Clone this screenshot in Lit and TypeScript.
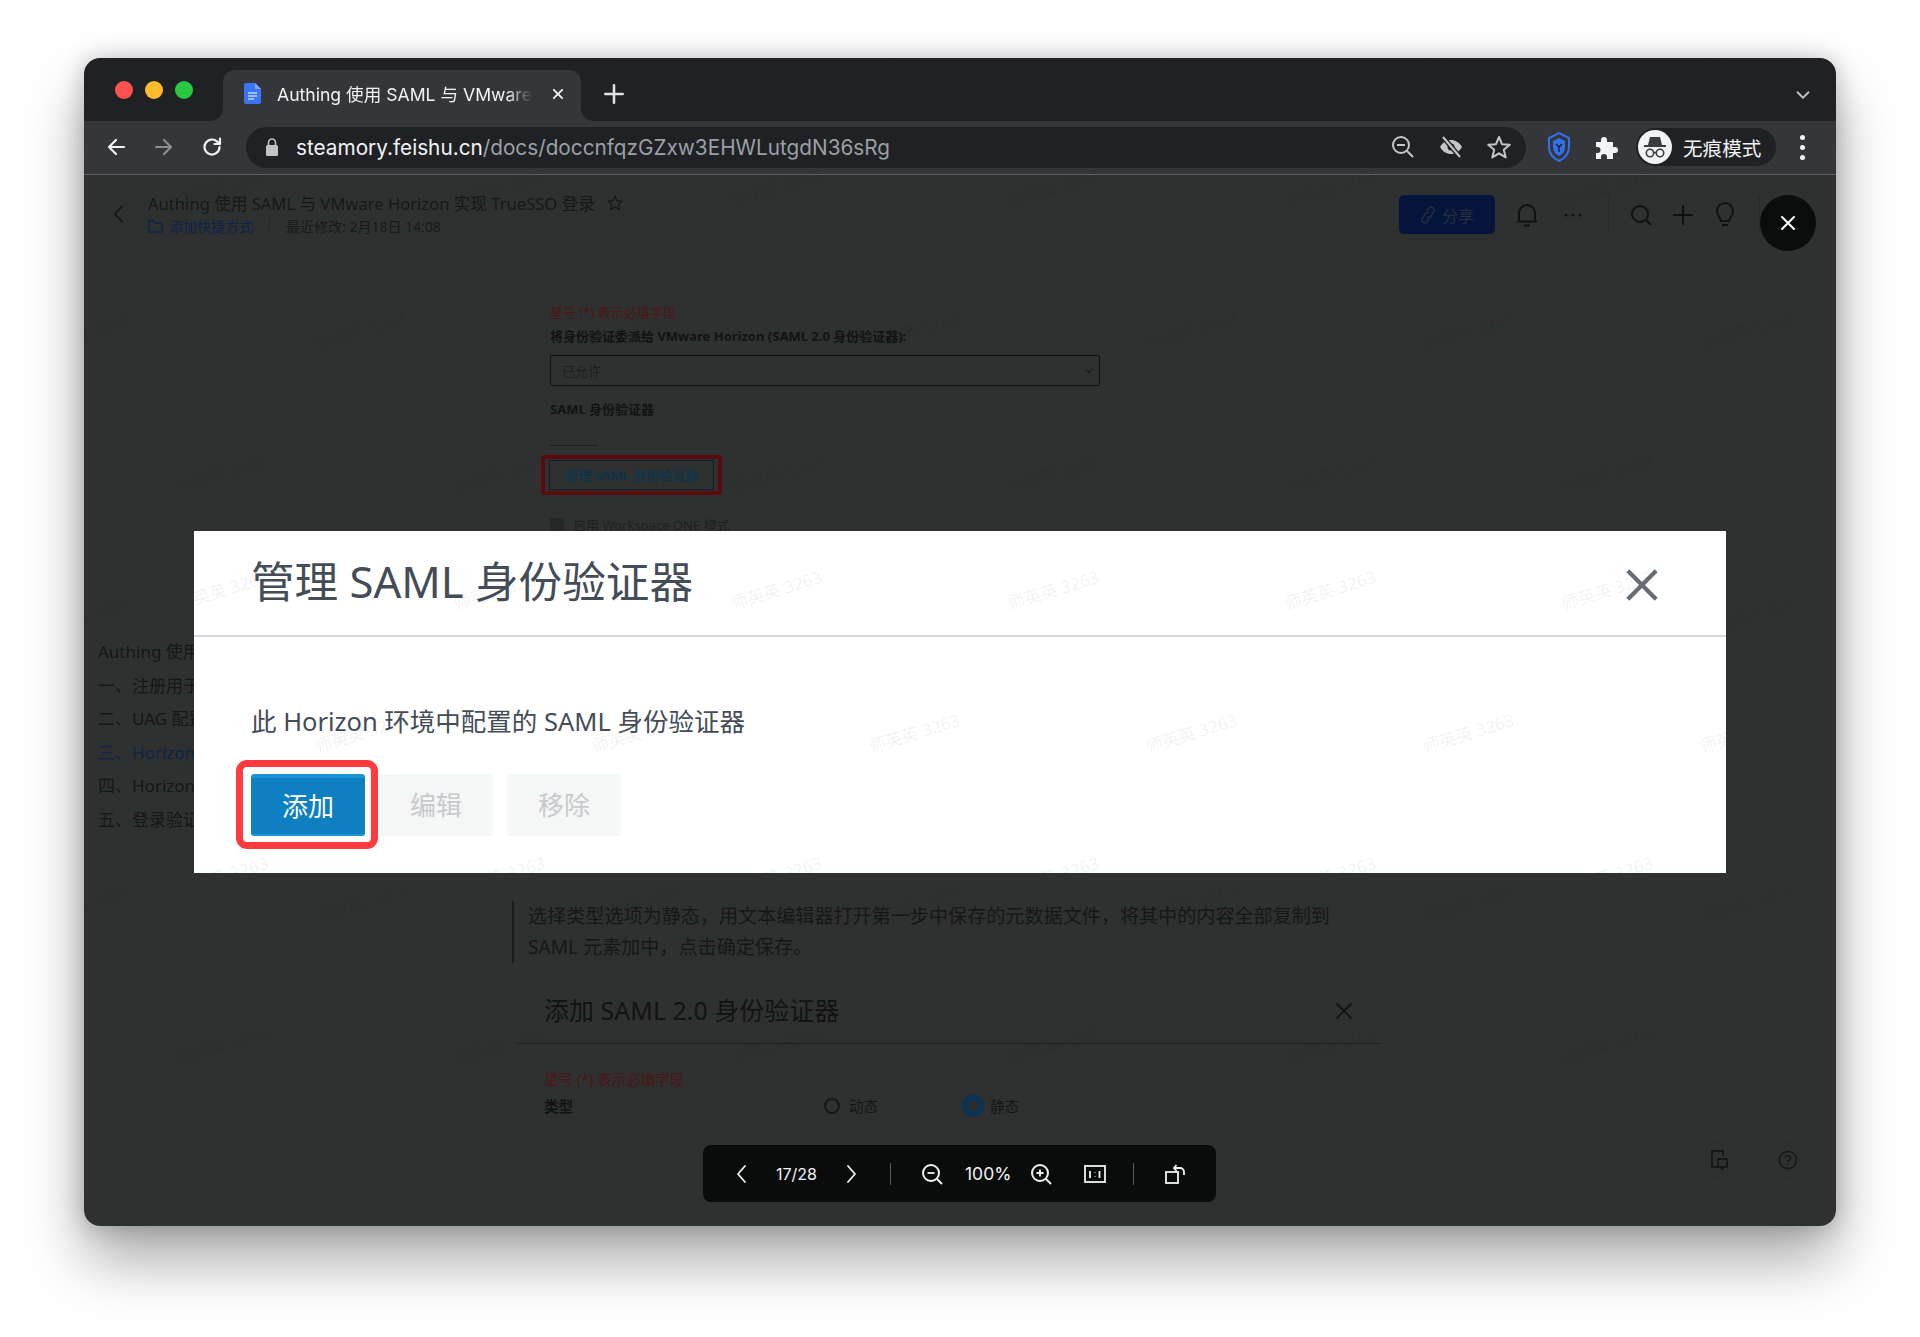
import { LitElement, html, css, svg } from "lit";
import { customElement } from "lit/decorators.js";

const ui = css`
  * { box-sizing: border-box; }
  svg { display: block; flex: none; }
`;

// watermark rows repeat every 143px, each second row shifted by 138px
const wmItems = (ox: number, oy: number, w: number, h: number) => {
  const items: { x: number; y: number }[] = [];
  for (let r = 0; r < 9; r++) {
    const y = 17 + r * 143;
    const shift = r % 2 === 0 ? 0 : 138;
    for (let k = -1; k < 8; k++) {
      const x = 222 + shift + k * 277;
      if (x - ox > -80 && x - ox < w + 80 && y - oy > -40 && y - oy < h + 40) {
        items.push({ x: x - ox, y: y - oy });
      }
    }
  }
  return items;
};

const chev = (d: string, size = 24, sw = 2) =>
  html`<svg width=${size} height=${size} viewBox="0 0 24 24" fill="none" stroke="currentColor" stroke-width=${sw} stroke-linecap="round" stroke-linejoin="round"><path d=${d}></path></svg>`;

@customElement("chrome-bar")
export class ChromeBar extends LitElement {
  static styles = [
    ui,
    css`
      :host { display: block; font-family: Inter, "Noto Sans CJK SC", sans-serif; }
      .strip {
        height: 63px;
        background: #202124;
        display: flex;
        align-items: flex-start;
        position: relative;
      }
      .lights { display: flex; gap: 12px; width: 139px; padding: 23px 0 0 31px; }
      .lights i { width: 18px; height: 18px; border-radius: 50%; display: block; }
      .tab {
        width: 358px;
        height: 51px;
        margin-top: 12px;
        background: #35363a;
        border-radius: 12px 12px 0 0;
        position: relative;
        display: flex;
        align-items: center;
        padding: 0 0 4px 21px;
        color: #f1f3f4;
        font-size: 17.6px;
      }
      .tab::before, .tab::after {
        content: "";
        position: absolute;
        bottom: 0;
        width: 12px;
        height: 12px;
      }
      .tab::before { left: -12px; background: radial-gradient(circle at 0 0, transparent 11.5px, #35363a 12px); }
      .tab::after { right: -12px; background: radial-gradient(circle at 100% 0, transparent 11.5px, #35363a 12px); }
      .tab-title {
        width: 255px;
        margin-left: 16px;
        white-space: nowrap;
        overflow: hidden;
        -webkit-mask-image: linear-gradient(90deg, #000 90%, transparent);
        mask-image: linear-gradient(90deg, #000 90%, transparent);
      }
      .tab-x { margin-left: 16px; color: #f1f3f4; }
      .plus { margin: 23px 0 0 20px; color: #dfe1e5; }
      .more { margin: 26px 0 0 auto; padding-right: 22px; color: #bdc1c6; }
      .tools {
        height: 54px;
        background: #35363a;
        border-bottom: 1px solid #5f6063;
        display: flex;
        align-items: center;
        padding-bottom: 1px;
        position: relative;
      }
      .nav { width: 162px; display: flex; padding-left: 20px; gap: 24px; color: #f1f3f4; }
      .nav .off { color: #8c8e91; }
      .omni {
        width: 1280px;
        height: 41px;
        border-radius: 21px;
        background: #202124;
        display: flex;
        align-items: center;
        padding: 0 14px 0 18px;
      }
      .url { margin-left: 16px; font-size: 20.75px; color: #f1f3f4; white-space: nowrap; flex: 1; }
      .url span { color: #9aa0a6; }
      .omni-icons { display: flex; gap: 22px; color: #c4c7c9; }
      .ext { display: flex; align-items: center; gap: 23px; margin-left: 21px; }
      .pill {
        width: 140px;
        height: 38px;
        margin-left: 18px;
        border-radius: 19px;
        background: #202124;
        display: flex;
        align-items: center;
        padding-left: 2px;
        color: #f1f3f4;
        font-size: 19.6px;
        gap: 11px;
      }
      .avatar { width: 34px; height: 34px; border-radius: 50%; background: #f1f3f4; display: flex; align-items: center; justify-content: center; }
      .dots { margin-left: 24px; display: flex; flex-direction: column; gap: 5px; }
      .dots i { width: 5px; height: 5px; border-radius: 50%; background: #f1f3f4; display: block; }
    `,
  ];

  render() {
    return html`
      <div class="strip">
        <div class="lights">
          <i style="background:#ff5150"></i><i style="background:#ffbb2c"></i><i style="background:#28c941"></i>
        </div>
        <div class="tab">
          <svg width="17" height="21" viewBox="0 0 17 21">
            <path d="M2 0h9l6 6v13a2 2 0 0 1-2 2H2a2 2 0 0 1-2-2V2a2 2 0 0 1 2-2z" fill="#3b74f5"></path>
            <path d="M11 0l6 6h-6z" fill="#7ea6fa"></path>
            <path d="M4 10h9M4 13h9M4 16h6" stroke="#fff" stroke-width="1.2"></path>
          </svg>
          <div class="tab-title">Authing 使用 SAML 与 VMware Horizon</div>
          <div class="tab-x">${chev("M7 7l10 10M17 7L7 17", 20, 2.2)}</div>
        </div>
        <div class="plus">${chev("M12 4v16M4 12h16", 26, 2.4)}</div>
        <div class="more">${chev("M6 9l6 6 6-6", 22, 2)}</div>
      </div>
      <div class="tools">
        <div class="nav">
          <div>${chev("M20 12H5M12 5l-7 7 7 7", 24, 2.2)}</div>
          <div class="off">${chev("M4 12h15M12 5l7 7-7 7", 24, 2.2)}</div>
          <div>${chev("M19.5 12a7.5 7.5 0 1 1-2.3-5.4L20 9M20 3.5V9h-5.5", 24, 2.2)}</div>
        </div>
        <div class="omni">
          <svg width="16" height="20" viewBox="0 0 16 20" fill="#bfc3c7">
            <rect x="2" y="8" width="12" height="11" rx="1.5"></rect>
            <path d="M4.5 8V5.5a3.5 3.5 0 0 1 7 0V8" fill="none" stroke="#bfc3c7" stroke-width="1.6"></path>
          </svg>
          <div class="url">steamory.feishu.cn<span>/docs/doccnfqzGZxw3EHWLutgdN36sRg</span></div>
          <div class="omni-icons">
            <svg width="26" height="26" viewBox="0 0 26 26" fill="none" stroke="currentColor" stroke-width="2">
              <circle cx="11" cy="11" r="8"></circle><path d="M7 11h8M17 17l6 6"></path>
            </svg>
            <svg width="26" height="26" viewBox="0 0 26 26" fill="none">
              <path d="M2 13c3-5 7-7 11-7s8 2 11 7c-3 5-7 7-11 7s-8-2-11-7z" fill="#c4c7c9"></path>
              <circle cx="13" cy="13" r="3.5" fill="#202124"></circle>
              <path d="M5 3l17 20" stroke="#202124" stroke-width="5"></path>
              <path d="M5 3l17 20" stroke="#c4c7c9" stroke-width="2"></path>
            </svg>
            <svg width="26" height="26" viewBox="0 0 26 26" fill="none" stroke="currentColor" stroke-width="2" stroke-linejoin="round">
              <path d="M13 3l3 7.200 7.800.6-6 5 1.900 7.600L13 19.300 6.300 23.400l1.900-7.600-6-5 7.800-.6z"></path>
            </svg>
          </div>
        </div>
        <div class="ext">
          <svg width="24" height="30" viewBox="0 0 24 30" fill="none" stroke="#3270f0" stroke-width="2">
            <path d="M12 1l10 5v9c0 6-4 11-10 14C6 26 2 21 2 15V6z"></path>
            <path d="M12 6l6 3v6c0 4-2 7-6 9-4-2-6-5-6-9V9z" fill="#3270f0" stroke="none"></path>
            <path d="M9 12l3 3 3-3M12 15v5" stroke="#202124" stroke-width="1.500"></path>
          </svg>
          <svg width="24" height="24" viewBox="0 0 24 24" fill="#f1f3f4">
            <path d="M2 7h5V5a3 3 0 0 1 6 0v2h6v5h2a3 3 0 0 1 0 6h-2v6h-6v-2a3 3 0 0 0-6 0v2H2v-6h1.500a3 3 0 0 0 0-6H2z"></path>
          </svg>
        </div>
        <div class="pill">
          <div class="avatar">
            <svg width="26" height="26" viewBox="0 0 26 26" fill="#3a3c40">
              <path d="M8 3h10l2 8H6z"></path><rect x="2" y="11" width="22" height="2"></rect>
              <circle cx="8" cy="19" r="3.700" fill="none" stroke="#3a3c40" stroke-width="1.600"></circle>
              <circle cx="18" cy="19" r="3.700" fill="none" stroke="#3a3c40" stroke-width="1.600"></circle>
              <path d="M11.500 18.500h3" stroke="#3a3c40" stroke-width="1.500"></path>
            </svg>
          </div>
          无痕模式
        </div>
        <div class="dots"><i></i><i></i><i></i></div>
      </div>
    `;
  }
}

@customElement("doc-page")
export class DocPage extends LitElement {
  static styles = [
    ui,
    css`
      :host {
        display: block;
        height: 1052px;
        overflow: hidden;
        background: #2f3130;
        font-family: "Noto Sans", "Noto Sans CJK SC", sans-serif;
        color: #131515;
      }
      .head { height: 80px; display: flex; position: relative; padding: 16px 0 0 22px; }
      .back { margin-top: 10px; width: 42px; color: #131515; }
      .title-line { display: flex; align-items: center; gap: 11px; font-size: 16.6px; height: 24px; color: #151717; }
      .sub { display: flex; align-items: center; font-size: 14px; height: 22px; color: #171919; }
      .sub .link { color: #0d2348; display: flex; align-items: center; gap: 6px; }
      .sub .bar { width: 1px; height: 16px; background: #26282a; margin: 0 16px; }
      .head-right { margin-left: auto; display: flex; align-items: center; height: 39px; margin-top: 4px; padding-right: 76px; color: #0f1111; }
      .share {
        width: 96px; height: 39px; border-radius: 5px; background: #05143a; color: #272e40;
        display: flex; align-items: center; justify-content: center; gap: 6px; font-size: 16px;
      }
      .vsep { width: 1px; height: 38px; background: #26282a; }
      .body { display: flex; }
      .toc { width: 428px; padding: 380px 0 0 14px; font-size: 17px; line-height: 33.5px; color: #141616; white-space: nowrap; }
      .toc .on { color: #0d2348; }
      .main { flex: 1; padding-top: 48px; }
      .form { padding-left: 38px; font-size: 13px; line-height: 18px; }
      .req { color: #4c1516; }
      .label { font-weight: 700; color: #111313; }
      .label-a { margin-top: 6px; }
      .select {
        width: 550px; height: 31px; margin-top: 10px; border: 1px solid #111313; border-radius: 2px;
        display: flex; align-items: center; justify-content: space-between; padding: 0 4px 0 11px; color: #1c1e1e;
      }
      .label-b { margin-top: 14px; }
      .tick { width: 48px; height: 1px; background: #1d1f1f; margin-top: 27px; }
      .mark { display: inline-block; border: 4px solid #5a0b0e; border-radius: 4px; padding: 1px 4px; margin: 9px 0 0 -9px; }
      .mgr {
        width: 165px; height: 30px; border: 1px solid #101c26; display: flex; align-items: center; justify-content: center;
        color: #0a3450; font-weight: 500;
      }
      .ws { display: flex; align-items: center; gap: 9px; margin-top: 21px; font-size: 13px; color: #1e2020; }
      .ws i { width: 14px; height: 14px; background: #262828; display: block; }
      .quote {
        margin-top: 367px; border-left: 2px solid #1a1c1c; padding-left: 14px;
        font-size: 19.1px; line-height: 31px; height: 62px; color: #151717; white-space: nowrap;
      }
      .dlg-head {
        width: 863px; margin: 31px 0 0 5px; height: 50px; padding: 0 24px 19px 27px; border-bottom: 1px solid #1d1f1f;
        display: flex; align-items: center; justify-content: space-between; font-size: 25px; color: #111313;
      }
      .dlg-x { margin-top: 4px; }
      .dlg-body { padding: 26px 0 0 32px; font-size: 14.5px; line-height: 18px; }
      .row { display: flex; align-items: center; margin-top: 7px; }
      .row .label { width: 280px; }
      .radio { width: 16px; height: 16px; border-radius: 50%; border: 2px solid #141616; margin-right: 9px; }
      .radio.on { width: 22px; height: 22px; border: 6px solid #0a3452; background: #2b2d2d; margin-right: 6px; margin-left: 84px; }
      .wm {
        position: absolute; font-size: 17px; color: rgba(0, 0, 0, 0.07); white-space: nowrap; pointer-events: none;
        transform: translate(-50%, -50%) rotate(-17deg);
      }
    `,
  ];

  render() {
    return html`
      <div class="head">
        <div class="back">${chev("M15 5l-7 7 7 7", 26, 1.6)}</div>
        <div>
          <div class="title-line">
            Authing 使用 SAML 与 VMware Horizon 实现 TrueSSO 登录
            <svg width="18" height="18" viewBox="0 0 24 24" fill="none" stroke="currentColor" stroke-width="1.800" stroke-linejoin="round">
              <path d="M12 3l2.800 6 6.500.7-4.800 4.400 1.300 6.500L12 17.300 6.200 20.600l1.300-6.500L2.700 9.700 9.200 9z"></path>
            </svg>
          </div>
          <div class="sub">
            <div class="link">
              <svg width="15" height="13" viewBox="0 0 15 13" fill="none" stroke="#0d2348" stroke-width="1.300"><path d="M1 2V12h13V3H7L6 1H1z"></path></svg>
              添加快捷方式
            </div>
            <div class="bar"></div>
            最近修改: 2月18日 14:08
          </div>
        </div>
        <div class="head-right">
          <div class="share">
            <svg width="16" height="18" viewBox="0 0 16 18" fill="none" stroke="#272e40" stroke-width="1.500"><path d="M7 5l2-3a3 3 0 0 1 5 3l-3 5a3 3 0 0 1-4 1M9 13l-2 3a3 3 0 0 1-5-3l3-5a3 3 0 0 1 4-1"></path></svg>
            分享
          </div>
          <svg style="margin-left:20px" width="24" height="26" viewBox="0 0 24 26" fill="none" stroke="currentColor" stroke-width="2">
            <path d="M4 19V11a8 8 0 0 1 16 0v8M2 19.500h20M9 23.500h6"></path>
          </svg>
          <svg style="margin-left:24px" width="20" height="6" viewBox="0 0 20 6" fill="#101212">
            <circle cx="3" cy="3" r="1.500"></circle><circle cx="10" cy="3" r="1.500"></circle><circle cx="17" cy="3" r="1.500"></circle>
          </svg>
          <div class="vsep" style="margin-left:25px"></div>
          <svg style="margin-left:20px" width="24" height="24" viewBox="0 0 24 24" fill="none" stroke="currentColor" stroke-width="2">
            <circle cx="11" cy="11" r="8"></circle><path d="M17 17l5 5"></path>
          </svg>
          <div style="margin-left:18px">${chev("M12 3v18M3 12h18", 24, 2)}</div>
          <svg style="margin-left:18px" width="24" height="28" viewBox="0 0 24 28" fill="none" stroke="currentColor" stroke-width="2">
            <path d="M8 20c0-3-4-5-4-10a8 8 0 0 1 16 0c0 5-4 7-4 10zM9 24h6"></path>
          </svg>
          <div class="vsep" style="margin-left:22px"></div>
        </div>
      </div>
      <div class="body">
        <div class="toc">
          <div>Authing 使用 SAML 与 VMware</div>
          <div>一、注册用于 SAML 的应用</div>
          <div>二、UAG 配置 SAML</div>
          <div class="on">三、Horizon 配置 SAML</div>
          <div>四、Horizon 配置 TrueSSO</div>
          <div>五、登录验证测试</div>
        </div>
        <div class="main">
          <div class="form">
            <div class="req">星号 (*) 表示必填字段</div>
            <div class="label label-a">将身份验证委派给 VMware Horizon (SAML 2.0 身份验证器):</div>
            <div class="select">已允许 ${chev("M6 9l6 6 6-6", 12, 3)}</div>
            <div class="label label-b">SAML 身份验证器</div>
            <div class="tick"></div>
            <div class="mark"><div class="mgr">管理 SAML 身份验证器</div></div>
            <div class="ws"><i></i>启用 Workspace ONE 模式</div>
          </div>
          <div class="quote">选择类型选项为静态，用文本编辑器打开第一步中保存的元数据文件，将其中的内容全部复制到<br />SAML 元素加中，点击确定保存。</div>
          <div class="dlg-head">
            添加 SAML 2.0 身份验证器
            <div class="dlg-x">${chev("M5 5l14 14M19 5L5 19", 24, 1.8)}</div>
          </div>
          <div class="dlg-body">
            <div class="req">星号 (*) 表示必填字段</div>
            <div class="row">
              <div class="label">类型</div>
              <div class="radio"></div>动态
              <div class="radio on"></div>静态
            </div>
          </div>
        </div>
      </div>
      ${wmItems(84, 174, 1752, 1052).map(
        (p) => html`<div class="wm" style="left:${p.x}px;top:${p.y}px">师英英 3263</div>`
      )}
    `;
  }
}

@customElement("saml-modal")
export class SamlModal extends LitElement {
  static styles = [
    ui,
    css`
      :host {
        display: block;
        width: 1532px;
        height: 342px;
        background: #fff;
        overflow: hidden;
        position: relative;
        font-family: "Noto Sans", "Noto Sans CJK SC", sans-serif;
        color: #434c57;
      }
      .top {
        height: 106px;
        padding: 0 67px 8px 57px;
        border-bottom: 2px solid #d5d8de;
        display: flex;
        align-items: center;
        justify-content: space-between;
        font-size: 43.6px;
      }
      .close { color: #676d74; margin-top: 12px; }
      .intro { margin: 66px 0 0 57px; font-size: 25.500px; line-height: 36px; }
      .btns { display: flex; gap: 14px; margin: 35px 0 0 57px; }
      .btn {
        width: 114px;
        height: 62px;
        border-radius: 3px;
        background: #f5f6f6;
        color: #c6cacd;
        font-size: 26px;
        padding-bottom: 2px;
        display: flex;
        align-items: center;
        justify-content: center;
      }
      .btn.primary { background: #0e7fc1; border-top: 4px solid #1b95d6; border-bottom: 2px solid #1b95d6; color: #fff; position: relative; padding-bottom: 3px; }
      .ring {
        position: absolute;
        left: -15px;
        right: -13px;
        top: -18px;
        bottom: -15px;
        border: 7px solid #ff3b40;
        border-radius: 11px;
      }
      .wm {
        position: absolute;
        font-size: 17px;
        color: rgba(40, 50, 60, 0.07);
        white-space: nowrap;
        pointer-events: none;
        transform: translate(-50%, -50%) rotate(-17deg);
      }
    `,
  ];

  render() {
    return html`
      <div class="top">
        管理 SAML 身份验证器
        <svg class="close" width="34" height="34" viewBox="0 0 36 36" fill="none" stroke="currentColor" stroke-width="4.500">
          <path d="M3 3l30 30M33 3L3 33"></path>
        </svg>
      </div>
      <div class="intro">此 Horizon 环境中配置的 SAML 身份验证器</div>
      <div class="btns">
        <div class="btn primary">添加<div class="ring"></div></div>
        <div class="btn">编辑</div>
        <div class="btn">移除</div>
      </div>
      ${wmItems(194, 531, 1532, 342).map(
        (p) => html`<div class="wm" style="left:${p.x}px;top:${p.y}px">师英英 3263</div>`
      )}
    `;
  }
}

@customElement("viewer-bar")
export class ViewerBar extends LitElement {
  static styles = [
    ui,
    css`
      :host {
        display: flex;
        align-items: center;
        width: 513px;
        height: 57px;
        border-radius: 8px;
        background: #0a0c0c;
        color: #f2f3f3;
        font-family: Inter, "Noto Sans", sans-serif;
        font-size: 16px;
        padding-left: 27px;
      }
      .sep { width: 1px; height: 22px; background: #55585a; }
    `,
  ];

  render() {
    const lens = (inner: string) => html`<svg width="24" height="24" viewBox="0 0 24 24" fill="none" stroke="currentColor" stroke-width="2">
      <circle cx="11" cy="11" r="8"></circle><path d="M17 17l5 5"></path>${svg`<path d=${inner} stroke-width="1.800"></path>`}
    </svg>`;
    return html`
      ${chev("M15 4l-7 8 7 8", 24, 1.800)}
      <span style="margin-left:22px;width:44px">17/28</span>
      <span style="margin-left:19px">${chev("M9 4l7 8-7 8", 24, 1.800)}</span>
      <div class="sep" style="margin-left:27px"></div>
      <span style="margin-left:29px">${lens("M7.500 11h7")}</span>
      <span style="margin-left:21px;width:46px;font-size:17.5px;white-space:nowrap">100%</span>
      <span style="margin-left:18px">${lens("M7.500 11h7M11 7.500v7")}</span>
      <svg style="margin-left:31px" width="22" height="20" viewBox="0 0 22 20" fill="none" stroke="currentColor" stroke-width="1.800">
        <rect x="1" y="2" width="20" height="16"></rect>
        <path d="M6 7v7M11 8v.5M11 12v.5M15.500 7v7"></path>
      </svg>
      <div class="sep" style="margin-left:27px"></div>
      <svg style="margin-left:30px" width="22" height="22" viewBox="0 0 22 22" fill="none" stroke="currentColor" stroke-width="1.800">
        <rect x="2" y="9" width="12" height="11"></rect>
        <path d="M10 5h6a4 4 0 0 1 4 4v3M12.500 2L10 5l2.500 3"></path>
      </svg>
    `;
  }
}

@customElement("app-root")
export class AppRoot extends LitElement {
  static styles = [
    ui,
    css`
      :host { display: block; height: 1337px; background: #fff; overflow: hidden; padding: 58px 0 0 84px; }
      .window {
        width: 1752px;
        height: 1168px;
        border-radius: 16px;
        overflow: hidden;
        position: relative;
        box-shadow: 0 34px 60px rgba(0, 0, 0, 0.34), 0 0 24px rgba(0, 0, 0, 0.22);
      }
      .wrap { position: relative; height: 1168px; }
      saml-modal { position: absolute; left: 110px; top: 473px; }
      viewer-bar { position: absolute; left: 619px; top: 1087px; }
      .close-round {
        position: absolute;
        left: 1676px;
        top: 137px;
        width: 56px;
        height: 56px;
        border-radius: 50%;
        background: #0b0d0d;
        color: #fff;
        display: flex;
        align-items: center;
        justify-content: center;
      }
      .helper {
        position: absolute;
        top: 1078px;
        width: 48px;
        height: 48px;
        border-radius: 50%;
        border: 1px solid #343635;
        color: #151717;
        display: flex;
        align-items: center;
        justify-content: center;
      }
    `,
  ];

  render() {
    return html`
      <div class="window">
        <div class="wrap">
          <chrome-bar></chrome-bar>
          <doc-page></doc-page>
          <saml-modal></saml-modal>
          <viewer-bar></viewer-bar>
          <div class="close-round">${chev("M6 6l12 12M18 6L6 18", 24, 2)}</div>
          <div class="helper" style="left:1611px">
            <svg width="20" height="22" viewBox="0 0 20 22" fill="none" stroke="currentColor" stroke-width="1.800">
              <path d="M14 18H3V2h11v5M9 10h9v8h-3l-2 2-1-2H9z"></path>
            </svg>
          </div>
          <div class="helper" style="left:1680px">
            <svg width="20" height="20" viewBox="0 0 20 20" fill="none" stroke="currentColor" stroke-width="1.600">
              <circle cx="10" cy="10" r="8.500"></circle><path d="M7.500 8a2.500 2.500 0 1 1 3.500 2.300c-.7.300-1 .8-1 1.700M10 14v1"></path>
            </svg>
          </div>
        </div>
      </div>
    `;
  }
}
